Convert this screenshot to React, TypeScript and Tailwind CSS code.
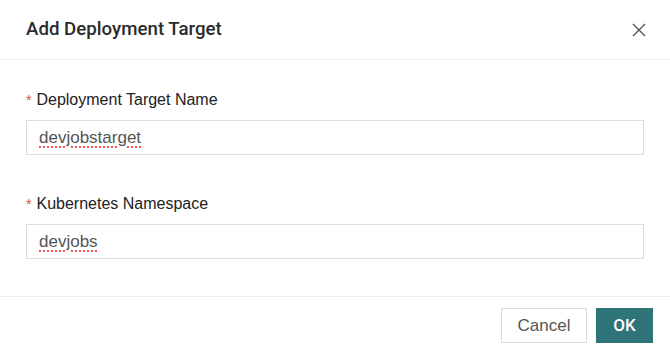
import React from 'react';

const App: React.FC = () => {
  return (
    <div className="w-[670px] h-[355px] bg-white flex flex-col font-['Liberation_Sans',Arial,sans-serif] text-[#333]">
      <header className="h-[60px] shrink-0 flex items-center justify-between pl-[26px] pr-[24px] border-b border-[#ececec]">
        <h2 className="font-['Roboto',Arial,sans-serif] text-[18.7px] font-medium text-[#2b2b2b]">Add Deployment Target</h2>
        <button className="w-[14px] h-[14px] text-[#555] flex items-center justify-center">
          <svg className="w-[14px] h-[14px]" viewBox="0 0 14 14" fill="none" stroke="currentColor" strokeWidth={1.4}>
            <path d="M1 1l12 12M13 1L1 13" />
          </svg>
        </button>
      </header>

      <div className="flex-1 px-[26px] pt-[30px]">
        <div className="mb-[39px]">
          <label className="flex items-center h-[20px] text-[16px] text-[#222]">
            <span className="text-[#e5484d] mr-[5px] text-[14px]">*</span>
            Deployment Target Name
          </label>
          <div className="mt-[10px] h-[35px] border border-[#dcdcdc] flex items-center px-[12px]">
            <span className="text-[17px] text-[#555] underline decoration-dotted decoration-[#e33] underline-offset-[4px]">devjobstarget</span>
          </div>
        </div>
        <div>
          <label className="flex items-center h-[20px] text-[16px] text-[#222]">
            <span className="text-[#e5484d] mr-[5px] text-[14px]">*</span>
            Kubernetes Namespace
          </label>
          <div className="mt-[10px] h-[35px] border border-[#dcdcdc] flex items-center px-[12px]">
            <span className="text-[17px] text-[#555] underline decoration-dotted decoration-[#e33] underline-offset-[4px]">devjobs</span>
          </div>
        </div>
      </div>

      <footer className="h-[59px] shrink-0 border-t border-[#ececec] flex items-start justify-end gap-[9px] pt-[11px] pr-[17px]">
        <button className="w-[86px] h-[35px] border border-[#dcdcdc] bg-white text-[17px] text-[#555]">Cancel</button>
        <button className="w-[57px] h-[35px] bg-[#2e7479] text-white text-[17px] font-['Roboto',Arial,sans-serif] font-medium">OK</button>
      </footer>
    </div>
  );
};

export default App;
